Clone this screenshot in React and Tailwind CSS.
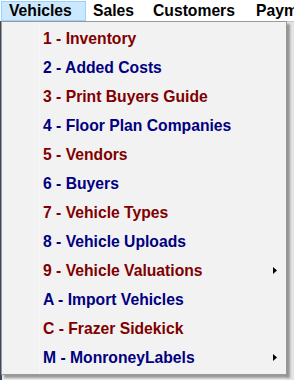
const items = [
  { label: '1 - Inventory', tone: 'red' },
  { label: '2 - Added Costs', tone: 'blue' },
  { label: '3 - Print Buyers Guide', tone: 'red' },
  { label: '4 - Floor Plan Companies', tone: 'blue' },
  { label: '5 - Vendors', tone: 'red' },
  { label: '6 - Buyers', tone: 'blue' },
  { label: '7 - Vehicle Types', tone: 'red' },
  { label: '8 - Vehicle Uploads', tone: 'blue' },
  { label: '9 - Vehicle Valuations', tone: 'red', sub: true },
  { label: 'A - Import Vehicles', tone: 'blue' },
  { label: 'C - Frazer Sidekick', tone: 'red' },
  { label: 'M - MonroneyLabels', tone: 'blue', sub: true },
]

function Arrow() {
  return (
    <svg width="4" height="7" viewBox="0 0 4 7" className="shrink-0">
      <path d="M0 0 L4 3.5 L0 7 Z" fill="#000" />
    </svg>
  )
}

export default function App() {
  return (
    <div
      className="relative h-[380px] w-[294px] overflow-hidden bg-[#ececec]"
      style={{ fontFamily: 'Tahoma, "Liberation Sans", Arial, sans-serif' }}
    >
      {/* menu bar */}
      <div className="flex h-[21px] items-center whitespace-nowrap bg-white text-[15.7px] font-bold text-black">
        <div className="ml-[1px] flex h-[20px] w-[85px] shrink-0 items-center border border-[#99d1ff] bg-[#cce8ff] pl-[7px]">
          Vehicles
        </div>
        <div className="w-[67px] shrink-0 pl-[7px]">Sales</div>
        <div className="w-[103px] shrink-0">Customers</div>
        <div className="shrink-0">Payments</div>
      </div>

      {/* background window content peeking out */}
      <div className="absolute left-0 top-[21px] h-[359px] w-[2px] bg-[#3d4a5a]" />
      <div className="absolute right-0 top-[21px] h-[359px] w-[8px] border-t border-[#c8c8c8] bg-[#e4e4e4]" />

      {/* dropdown */}
      <div className="absolute left-[1px] top-[21px] flex w-[286px] flex-col border border-[#999999] bg-[#f2f2f2] py-[2px] shadow-[3px_3px_2px_rgba(0,0,0,0.35)]">
        <div className="absolute bottom-0 left-[37px] top-0 w-px bg-[#f7f7f7]" />
        {items.map((it) => (
          <div
            key={it.label}
            className={`flex h-[29px] shrink-0 items-center pl-[41px] pr-[9px] text-[15.7px] font-bold ${
              it.tone === 'red' ? 'text-[#800000]' : 'text-[#000080]'
            }`}
          >
            <span className="flex-1 whitespace-nowrap">{it.label}</span>
            {it.sub && <Arrow />}
          </div>
        ))}
      </div>
    </div>
  )
}
